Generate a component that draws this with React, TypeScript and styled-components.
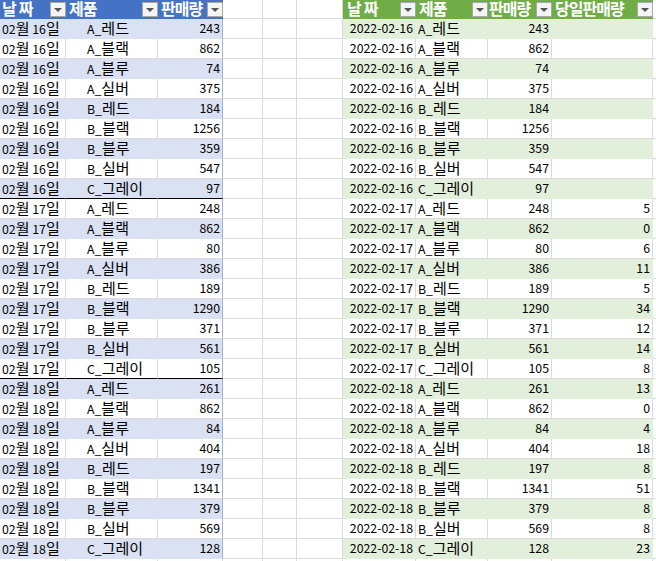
import React from "react";
import styled, { createGlobalStyle } from "styled-components";

const GRID = "#DADADA";

const GlobalStyle = createGlobalStyle`
  html, body { margin: 0; padding: 0; background: #fff; }
  body { font-family: "Noto Sans CJK KR", "Noto Sans", sans-serif; }
`;

type Tone = { head: string; band: string; edge: string };
const BLUE: Tone = { head: "#4472C4", band: "#D9E1F2", edge: "#9BB2DE" };
const GREEN: Tone = { head: "#70AD47", band: "#E2EFDA", edge: GRID };

const Sheet = styled.div`
  display: flex;
  align-items: flex-start;
  width: 656px;
  height: 561px;
  overflow: hidden;
  background: #fff;
`;

const Block = styled.div<{ $cols: string }>`
  flex: none;
  display: grid;
  grid-template-columns: ${(p) => p.$cols};
  grid-template-rows: 19px;
  grid-auto-rows: 20px;
`;

const Head = styled.div<{ $bg: string; $pad: number }>`
  display: flex;
  align-items: flex-start;
  background: ${(p) => p.$bg};
  color: #fff;
  font-size: 16px;
  font-weight: 700;
  line-height: 17px;
  padding-left: ${(p) => p.$pad}px;
  white-space: nowrap;
`;

const HeadText = styled.span<{ $spread?: number }>`
  letter-spacing: ${(p) => p.$spread ?? -1}px;
`;

const Drop = styled.span`
  flex: none;
  margin-left: auto;
  margin-top: 2px;
  width: 16px;
  height: 15px;
  box-sizing: border-box;
  border: 1px solid #a8a8a8;
  background: #f4f4f4;
  display: flex;
  align-items: center;
  justify-content: center;
  &::after {
    content: "";
    border-left: 4px solid transparent;
    border-right: 4px solid transparent;
    border-top: 4px solid #555;
  }
`;

const Cell = styled.div<{
  $fill?: string;
  $align?: "left" | "right";
  $indent?: number;
  $thick?: boolean;
  $edge?: string;
}>`
  box-sizing: border-box;
  background: ${(p) => p.$fill ?? "#fff"};
  border-right: 1px solid ${(p) => p.$edge ?? (p.$fill ? p.$fill : GRID)};
  border-bottom: 1px solid ${(p) => (p.$thick ? "#000" : p.$fill ? p.$fill : GRID)};
  color: #000;
  font-size: 12.3px;
  line-height: 18px;
  padding: 0 2px 0 ${(p) => p.$indent ?? 2}px;
  text-align: ${(p) => p.$align ?? "left"};
  white-space: nowrap;
`;

const Hangul = styled.span`
  font-size: 15px;
`;

const Empty = styled.div`
  box-sizing: border-box;
  border-right: 1px solid ${GRID};
  border-bottom: 1px solid ${GRID};
`;

const Mixed = ({ text }: { text: string }) => (
  <>
    {text.split(/([\uAC00-\uD7A3]+)/).map((part, i) =>
      /[\uAC00-\uD7A3]/.test(part) ? <Hangul key={i}>{part}</Hangul> : part
    )}
  </>
);

const HeaderCell = ({ bg, pad, label, spread }: { bg: string; pad: number; label: string; spread?: number }) => (
  <Head $bg={bg} $pad={pad}>
    <HeadText $spread={spread}>{label}</HeadText>
    <Drop />
  </Head>
);

const products = ["A_레드", "A_블랙", "A_블루", "A_실버", "B_레드", "B_블랙", "B_블루", "B_실버", "C_그레이"];
const sales: number[][] = [
  [243, 862, 74, 375, 184, 1256, 359, 547, 97],
  [248, 862, 80, 386, 189, 1290, 371, 561, 105],
  [261, 862, 84, 404, 197, 1341, 379, 569, 128],
];
const days = ["16", "17", "18"];

type Rec = { day: string; product: string; qty: number; delta: number | null };
const rows: Rec[] = [];
days.forEach((d, di) =>
  products.forEach((p, pi) =>
    rows.push({
      day: d,
      product: p,
      qty: sales[di][pi],
      delta: di === 0 ? null : sales[di][pi] - sales[di - 1][pi],
    })
  )
);

const TOTAL_ROWS = 29;

const LeftTable = () => (
  <Block $cols="66px 92px 65px">
    <HeaderCell bg={BLUE.head} pad={2} label="날짜" spread={2} />
    <HeaderCell bg={BLUE.head} pad={3} label="제품" />
    <HeaderCell bg={BLUE.head} pad={3} label="판매량" />
    {rows.map((r, i) => {
      const fill = i % 2 === 0 ? BLUE.band : undefined;
      const thick = i === 8 || i === 17;
      return (
        <React.Fragment key={i}>
          <Cell $fill={fill} $thick={thick}><Mixed text={`02월 ${r.day}일`} /></Cell>
          <Cell $fill={fill} $thick={thick} $indent={21}><Mixed text={r.product} /></Cell>
          <Cell $fill={fill} $thick={thick} $align="right" $edge={BLUE.edge}>{r.qty}</Cell>
        </React.Fragment>
      );
    })}
    {[0, 1, 2].map((k) => <Empty key={k} />)}
  </Block>
);

const Filler = ({ cols, count }: { cols: string; count: number }) => (
  <Block $cols={cols}>
    {Array.from({ length: TOTAL_ROWS * count }).map((_, i) => <Empty key={i} />)}
  </Block>
);

const RightTable = () => (
  <Block $cols="73px 72px 64px 101px">
    <HeaderCell bg={GREEN.head} pad={4} label="날짜" spread={2} />
    <HeaderCell bg={GREEN.head} pad={3} label="제품" />
    <HeaderCell bg={GREEN.head} pad={1} label="판매량" />
    <HeaderCell bg={GREEN.head} pad={3} label="당일판매량" />
    {rows.map((r, i) => {
      const fill = i % 2 === 0 ? GREEN.band : undefined;
      return (
        <React.Fragment key={i}>
          <Cell $fill={fill} $align="right">2022-02-{r.day}</Cell>
          <Cell $fill={fill}><Mixed text={r.product} /></Cell>
          <Cell $fill={fill} $align="right">{r.qty}</Cell>
          <Cell $fill={fill} $align="right">{r.delta ?? ""}</Cell>
        </React.Fragment>
      );
    })}
    {[0, 1, 2, 3].map((k) => <Empty key={k} />)}
  </Block>
);

export default function App() {
  return (
    <>
      <GlobalStyle />
      <Sheet>
        <LeftTable />
        <Filler cols="40px 34px 46px" count={3} />
        <RightTable />
        <Filler cols="20px" count={1} />
      </Sheet>
    </>
  );
}
